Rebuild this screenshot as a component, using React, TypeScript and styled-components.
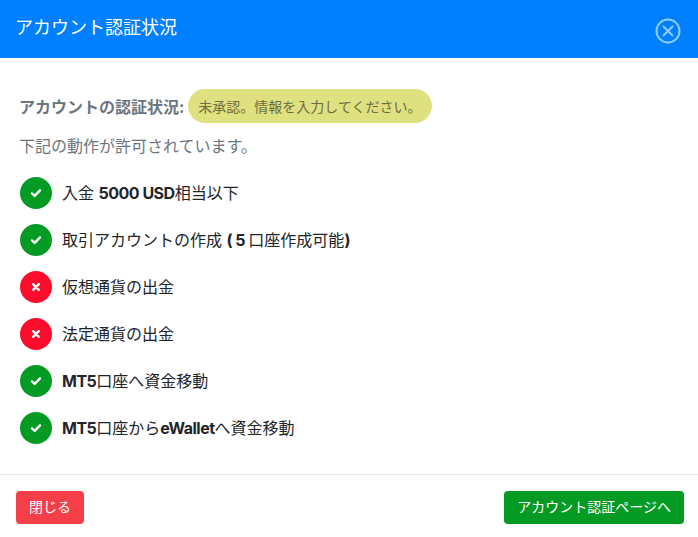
import React from 'react';
import styled, { createGlobalStyle } from 'styled-components';

const GlobalStyle = createGlobalStyle`
  html, body {
    margin: 0;
    padding: 0;
    background: #fff;
  }
  body {
    font-family: Inter, "Noto Sans CJK JP", sans-serif;
  }
`;

type Permission = { allowed: boolean; label: React.ReactNode };

const permissions: Permission[] = [
  { allowed: true, label: <>入金 <b>5000 USD</b>相当以下</> },
  { allowed: true, label: <>取引アカウントの作成 <b>( 5 </b>口座作成可能<b>)</b></> },
  { allowed: false, label: <>仮想通貨の出金</> },
  { allowed: false, label: <>法定通貨の出金</> },
  { allowed: true, label: <><b>MT5</b>口座へ資金移動</> },
  { allowed: true, label: <><b>MT5</b>口座から<b>eWallet</b>へ資金移動</> },
];

const App = () => {
  return (
    <Modal>
      <GlobalStyle />
      <Header>
        <Title>アカウント認証状況</Title>
        <CloseIcon aria-label="close">
          <svg width="26" height="26" viewBox="0 0 26 26" fill="none" stroke="currentColor" strokeWidth="2" strokeLinecap="round">
            <circle cx="13" cy="13" r="11.5" />
            <path d="M8.5 8.5l9 9M17.5 8.5l-9 9" />
          </svg>
        </CloseIcon>
      </Header>
      <Body>
        <StatusLine>
          <StatusLabel>アカウントの認証状況:</StatusLabel>
          <Badge>未承認。情報を入力してください。</Badge>
        </StatusLine>
        <Note>下記の動作が許可されています。</Note>
        <List>
          {permissions.map((item, i) => (
            <Row key={i}>
              <StatusIcon $allowed={item.allowed}>
                {item.allowed ? (
                  <svg width="12" height="12" viewBox="0 0 12 12" fill="none" stroke="#fff" strokeWidth="2.4" strokeLinecap="round" strokeLinejoin="round">
                    <path d="M2 6.4l2.7 2.5L10 3.4" />
                  </svg>
                ) : (
                  <svg width="12" height="12" viewBox="0 0 12 12" fill="none" stroke="#fff" strokeWidth="2.4" strokeLinecap="round">
                    <path d="M3.2 3.2l5.6 5.6M8.8 3.2l-5.6 5.6" />
                  </svg>
                )}
              </StatusIcon>
              <RowText>{item.label}</RowText>
            </Row>
          ))}
        </List>
      </Body>
      <Footer>
        <Button $color="#f43f48">閉じる</Button>
        <Button $color="#049b24">アカウント認証ページへ</Button>
      </Footer>
    </Modal>
  );
};

const Modal = styled.div`
  width: 698px;
  height: 537px;
  display: flex;
  flex-direction: column;
  overflow: hidden;
  background: #fff;
`;

const Header = styled.div`
  height: 58px;
  flex: none;
  display: flex;
  align-items: center;
  justify-content: space-between;
  padding: 0 17px 0 15px;
  background: #0080ff;
`;

const Title = styled.div`
  color: #fff;
  font-size: 18px;
  line-height: 24px;
  margin-top: -3px;
`;

const CloseIcon = styled.div`
  display: flex;
  color: #8fcbff;
  margin-top: 3px;
`;

const Body = styled.div`
  flex: 1;
  padding: 31px 20px 0 19px;
`;

const StatusLine = styled.div`
  display: flex;
  align-items: center;
  gap: 4px;
  height: 34px;
`;

const StatusLabel = styled.span`
  color: #6c757d;
  font-size: 16px;
  font-weight: 700;
`;

const Badge = styled.span`
  display: flex;
  align-items: center;
  height: 34px;
  padding: 0 10px;
  border-radius: 17px;
  background: #dfe07f;
  color: #6c6e3f;
  font-size: 14px;
`;

const Note = styled.div`
  margin-top: 11px;
  color: #6c757d;
  font-size: 16px;
  line-height: 24px;
`;

const List = styled.div`
  margin-top: 19px;
  display: flex;
  flex-direction: column;
  gap: 15px;
`;

const Row = styled.div`
  display: flex;
  align-items: center;
  gap: 10px;
  height: 32px;
  padding-left: 1px;
`;

const StatusIcon = styled.span<{ $allowed: boolean }>`
  flex: none;
  width: 32px;
  height: 32px;
  border-radius: 50%;
  display: flex;
  align-items: center;
  justify-content: center;
  background: ${(p) => (p.$allowed ? '#049b24' : '#ff0b2c')};
`;

const RowText = styled.span`
  color: #212529;
  font-size: 16px;
  margin-bottom: 2px;
  white-space: pre-wrap;

  b {
    font-weight: 700;
    letter-spacing: -0.5px;
  }
`;

const Footer = styled.div`
  flex: none;
  box-sizing: border-box;
  height: 63px;
  border-top: 1px solid #e6e6e6;
  display: flex;
  align-items: flex-start;
  justify-content: space-between;
  padding: 16px 14px 0 16px;
`;

const Button = styled.button<{ $color: string }>`
  height: 33px;
  padding: 0 13px 3px;
  border: none;
  border-radius: 4px;
  background: ${(p) => p.$color};
  color: #fff;
  font-family: inherit;
  font-size: 14px;
  cursor: pointer;
`;

export default App;
